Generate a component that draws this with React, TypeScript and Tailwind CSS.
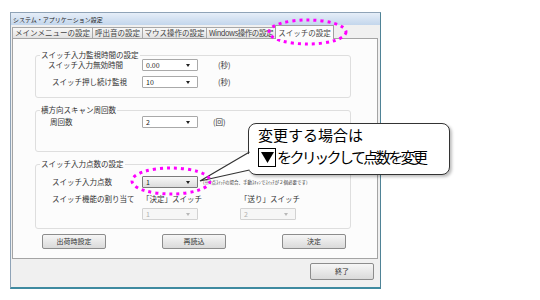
import React from "react";

type ComboProps = {
  value: string;
  variant?: "normal" | "focus" | "disabled";
};

function Combo({ value, variant = "normal" }: ComboProps) {
  const box =
    variant === "focus"
      ? "border-[#7a7a7a] bg-gradient-to-b from-[#f8f8f8] to-[#dcdcdc] text-[#222]"
      : variant === "disabled"
        ? "border-[#d2d2d2] bg-[#f6f6f6] text-[#b0b0b0]"
        : "border-[#a9a9a9] bg-white text-[#222]";
  return (
    <div
      className={`w-[56px] h-[12px] shrink-0 flex items-center justify-between rounded-[1px] border pl-[3px] pr-[7px] ${box}`}
    >
      <span className="text-[7px] leading-none">{value}</span>
      <svg width="4" height="3" viewBox="0 0 4 3">
        <path d="M0 0H4L2 3Z" fill={variant === "disabled" ? "#b8b8b8" : "#222"} />
      </svg>
    </div>
  );
}

function Button({ label, tall }: { label: string; tall?: boolean }) {
  return (
    <div
      className={`w-[64px] ${tall ? "h-[17px]" : "h-[15px]"} flex items-center justify-center rounded-[2px] border border-[#8c8c8c] bg-gradient-to-b from-[#f6f6f6] to-[#dadada] text-[7px] text-[#333]`}
    >
      {label}
    </div>
  );
}

function Tab({ label, width, active, tight }: { label: string; width: string; active?: boolean; tight?: boolean }) {
  if (active) {
    return (
      <div
        className={`${width} h-[14px] relative z-10 -mb-[1px] flex items-center justify-center border border-b-0 border-[#a0a0a0] bg-[#fcfcfc] text-[7.5px] text-[#444]`}
      >
        {label}
      </div>
    );
  }
  return (
    <div
      className={`${width} h-[11px] -mr-[1px] flex items-center justify-center border border-b-0 border-[#a8a8a8] bg-gradient-to-b from-[#f8f8f8] to-[#e2e2e2] text-[7.5px] text-[#444] whitespace-nowrap overflow-hidden ${tight ? "tracking-[-0.45px]" : ""}`}
    >
      {label}
    </div>
  );
}

function Group({ title, children, className }: { title: string; children: React.ReactNode; className: string }) {
  return (
    <fieldset className={`w-[316px] rounded-[3px] border border-[#dedede] ${className}`}>
      <legend className="ml-[4px] px-[1px] text-[7.5px] leading-[8px] text-[#333]">{title}</legend>
      {children}
    </fieldset>
  );
}

export default function App() {
  return (
    <div className="relative w-[540px] h-[300px] overflow-hidden bg-white font-['Noto_Sans_CJK_JP',sans-serif] pt-[12px] pl-[10px]">
      <div className="w-[371px] h-[277px] flex flex-col border border-[#8fa3b7] border-r-[#4f8396] border-b-2 border-b-[#3f8aa0] bg-[#f0f0f0]">
        <div className="h-[12px] flex items-center pl-[2px] bg-gradient-to-b from-[#e6eef8] to-[#c3d6ec] text-[6px] text-[#222]">
          システム・アプリケーション設定
        </div>
        <div className="h-[13px] flex items-end pl-[1px]">
          <Tab label="メインメニューの設定" width="w-[81px]" />
          <Tab label="呼出音の設定" width="w-[51px]" />
          <Tab label="マウス操作の設定" width="w-[65px]" />
          <Tab label="Windows操作の設定" width="w-[70px]" tight />
          <Tab label="スイッチの設定" width="w-[59px]" active />
        </div>
        <div className="ml-[1px] w-[366px] h-[221px] border border-[#a4a4a4] bg-[#fcfcfc] pt-[12px] pl-[22px] flex flex-col">
          <Group title="スイッチ入力監視時間の設定" className="h-[47px]">
            <div className="flex flex-col gap-[5px] text-[7.5px] text-[#333]">
              <div className="flex items-center">
                <span className="pl-[12px] w-[106px]">スイッチ入力無効時間</span>
                <Combo value="0.00" />
                <span className="ml-[20px]">(秒)</span>
              </div>
              <div className="flex items-center">
                <span className="pl-[16px] w-[106px]">スイッチ押し続け監視</span>
                <Combo value="10" />
                <span className="ml-[20px]">(秒)</span>
              </div>
            </div>
          </Group>
          <Group title="横方向スキャン周回数" className="h-[46px] mt-[8px]">
            <div className="flex items-center mt-[2px] text-[7.5px] text-[#333]">
              <span className="pl-[14px] w-[106px]">周回数</span>
              <Combo value="2" />
              <span className="ml-[15px]">(回)</span>
            </div>
          </Group>
          <Group title="スイッチ入力点数の設定" className="h-[69px] mt-[8px]">
            <div className="flex flex-col text-[7.5px] text-[#333]">
              <div className="flex items-center mt-[8px]">
                <span className="pl-[16px] w-[106px]">スイッチ入力点数</span>
                <Combo value="1" variant="focus" />
                <span className="ml-[5px] text-[4.5px] whitespace-nowrap">
                  (※1点ｽｲｯﾁの場合、手動ｽｷｬﾝでｽｲｯﾁが２個必要です)
                </span>
              </div>
              <div className="flex items-center mt-[6px] h-[10px]">
                <span className="pl-[16px] w-[106px]">スイッチ機能の割り当て</span>
                <span className="w-[98px]">「決定」スイッチ</span>
                <span>「送り」スイッチ</span>
              </div>
              <div className="flex items-center mt-[4px]">
                <span className="w-[106px]" />
                <Combo value="1" variant="disabled" />
                <span className="w-[42px]" />
                <Combo value="2" variant="disabled" />
              </div>
            </div>
          </Group>
          <div className="flex gap-[56px] mt-[5px] pl-[7px]">
            <Button label="出荷時設定" />
            <Button label="再読込" />
            <Button label="決定" />
          </div>
        </div>
        <div className="flex justify-end pt-[4px] pr-[6px]">
          <Button label="終了" tall />
        </div>
      </div>

      {/* annotation: callout */}
      <div className="absolute left-[248px] top-[123px] w-[202px] h-[52px] rounded-[8px] border-[1.5px] border-[#333] bg-white shadow-[2px_2px_3px_rgba(0,0,0,0.25)] pl-[9px] text-[15px] leading-[22px] text-black">
        <div>変更する場合は</div>
        <div className="flex items-center tracking-[-2.6px]">
          <span className="inline-flex w-[18px] h-[19px] mr-[1px] items-center justify-center border-[1.5px] border-black">
            <svg width="13" height="11" viewBox="0 0 13 11">
              <path d="M0 0H13L6.5 11Z" fill="#000" />
            </svg>
          </span>
          をクリックして点数を変更
        </div>
      </div>
      <svg className="absolute left-0 top-0 pointer-events-none" width="540" height="300">
        <path d="M252 152 L200 181 L252 170 Z" fill="#fff" />
        <path d="M249.5 152 L200 181 L249.5 170" fill="none" stroke="#333" strokeWidth="1.2" />
        <ellipse cx="307.5" cy="32" rx="38.5" ry="12" fill="none" stroke="#ff00ff" strokeWidth="3" strokeDasharray="3 4" />
        <ellipse cx="171" cy="181" rx="39" ry="13" fill="none" stroke="#ff00ff" strokeWidth="3" strokeDasharray="3 4" />
      </svg>
    </div>
  );
}
